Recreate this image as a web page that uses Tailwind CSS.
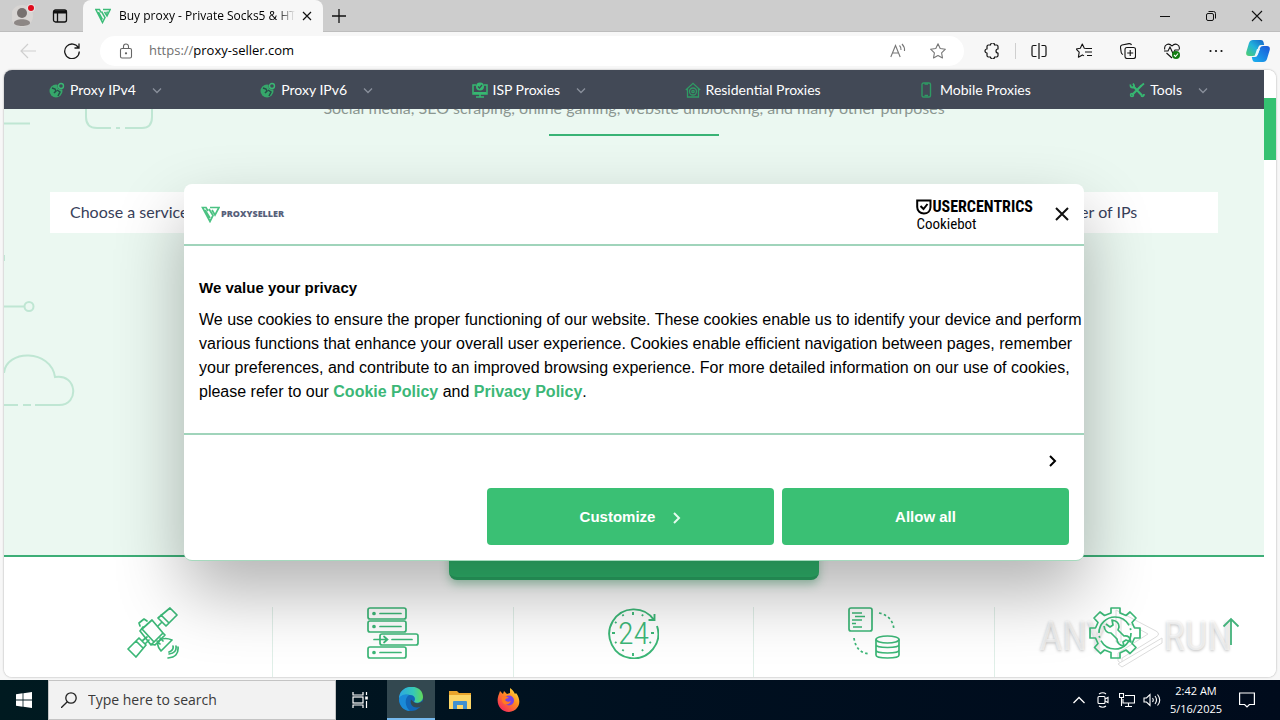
<!DOCTYPE html>
<html lang="en">
<head>
  <meta charset="UTF-8" />
  <meta name="viewport" content="width=device-width, initial-scale=1.0" />
  <title>Buy proxy - Private Socks5 &amp; HTTPs</title>
  <script src="https://cdn.jsdelivr.net/npm/@tailwindcss/browser@4"></script>
</head>
<body class="h-screen flex flex-col overflow-hidden bg-[#f7f7f7] text-black font-['Open_Sans','Noto_Sans',sans-serif]">

  <!-- Tab strip -->
  <div class="h-8 shrink-0 flex items-stretch bg-[#cdcdcd] border-b border-[#bdbdbd]">
    <div class="w-[83px] flex items-center pl-3 gap-4">
      <button aria-label="Profile">
        <svg class="w-6 h-6" viewBox="0 0 24 24"><circle cx="10" cy="12" r="11" fill="#d8d5d3"/><circle cx="10" cy="9" r="5" fill="#77716f"/><path d="M2 19c0-5 16-5 16 0 0 4-16 4-16 0z" fill="#8d8785"/><circle cx="19" cy="4" r="4" fill="#e8e0e0"/><circle cx="19" cy="4" r="3" fill="#e00b1c"/></svg>
      </button>
      <button aria-label="Tab actions">
        <svg class="w-4 h-4" viewBox="0 0 16 16" fill="none" stroke="#111" stroke-width="1.3"><rect x="1.5" y="2" width="13" height="12" rx="2"/><path d="M1.5 4h13" stroke-width="3"/><path d="M5.5 4v10"/></svg>
      </button>
    </div>
    <div class="w-60 flex items-center -mb-px pl-3 pr-2 bg-[#f7f7f7] rounded-t-lg">
      <svg class="w-4 h-4 mr-2 shrink-0" viewBox="0 0 16 16" fill="none" stroke="#3cbc78" stroke-width="1.5"><path d="M6 4.500L4.500 1.500H.8L7.500 14.500 10 9.500 6.500 3.500M8 1.500h7.200L12 8 9.500 3.800M3.500 4l4 7.500M12.500 3.500L11.500 5.500"/></svg>
      <span class="flex-1 text-xs whitespace-nowrap overflow-hidden mask-r-from-90%">Buy proxy - Private Socks5 &amp; HTTPs</span>
      <button aria-label="Close tab" class="ml-1">
        <svg class="w-4 h-4" viewBox="0 0 16 16" fill="none" stroke="#111" stroke-width="1.2"><path d="M4 4l8 8M12 4l-8 8"/></svg>
      </button>
    </div>
    <button aria-label="New tab" class="px-2">
      <svg class="w-4 h-4" viewBox="0 0 16 16" stroke="#111" stroke-width="1.3"><path d="M1 8h14M8 1v14"/></svg>
    </button>
    <div class="ml-auto flex">
      <button aria-label="Minimize" class="w-[46px] grid place-items-center"><svg class="w-3 h-3" viewBox="0 0 12 12" stroke="#111"><path d="M1 6.500h10"/></svg></button>
      <button aria-label="Restore" class="w-[46px] grid place-items-center"><svg class="w-3 h-3" viewBox="0 0 12 12" fill="none" stroke="#111"><rect x="1.500" y="3.500" width="7" height="7" rx="1.500"/><path d="M3.500 1.500h5a2 2 0 0 1 2 2v5"/></svg></button>
      <button aria-label="Close" class="w-[46px] grid place-items-center"><svg class="w-3 h-3" viewBox="0 0 12 12" stroke="#111" stroke-width="1.100"><path d="M1 1l10 10M11 1L1 11"/></svg></button>
    </div>
  </div>

  <!-- Toolbar -->
  <div class="h-[38px] shrink-0 flex items-center pl-5 pr-0.5">
    <button aria-label="Back" class="mr-7"><svg class="w-4 h-4" viewBox="0 0 16 16" fill="none" stroke="#cfcfcf" stroke-width="1.200"><path d="M16 8H1M8 1L1 8l7 7"/></svg></button>
    <button aria-label="Refresh" class="mr-5"><svg class="w-4 h-4" viewBox="0 0 16 16" fill="none" stroke="#1a1a1a" stroke-width="1.300"><path d="M14.500 5A7.300 7.300 0 1 0 15.300 8.500M15 .5V5h-4.500"/></svg></button>
    <div class="flex-1 h-[30px] flex items-center bg-white rounded-full pl-[18px] pr-[18px]">
      <svg class="w-4 h-4" viewBox="0 0 16 16" fill="none" stroke="#666" stroke-width="1.100"><rect x="2.500" y="5.500" width="11" height="9.500" rx="1.500"/><path d="M5.500 5.500V3.500a2.500 2.500 0 0 1 5 0v2"/><circle cx="8" cy="10.300" r=".6" fill="#666"/></svg>
      <a href="https://proxy-seller.com" class="ml-[15px] text-[13px]"><span class="text-[#707070]">https://</span>proxy-seller.com</a>
      <button aria-label="Read aloud" class="ml-auto"><svg class="w-4 h-4" viewBox="0 0 16 16" fill="none" stroke="#777" stroke-width="1.100"><path d="M.8 14L5.500 2.500 10.200 14M2.500 10h6M9.500 2.500q1.800 1.800 1.500 4.500M12 1q3 3 2.500 7"/></svg></button>
      <button aria-label="Add to favorites" class="ml-6"><svg class="w-4 h-4" viewBox="0 0 16 16" fill="none" stroke="#777" stroke-width="1.100" stroke-linejoin="round"><path d="M8 .8l2.200 4.700 5.200.7-3.800 3.600.9 5.200L8 12.500 3.500 15l.9-5.200L.6 6.200l5.200-.7z"/></svg></button>
    </div>
    <button aria-label="Extensions" class="w-[51px] pl-1 grid place-items-center"><svg class="w-4 h-4" viewBox="0 0 16 16" fill="none" stroke="#111" stroke-width="1.200" stroke-linejoin="round"><path d="M4.500 2h2a2 2 0 0 1 4 0h2q1.500 0 1.500 1.500V6a2 2 0 1 0 0 4v2.500q0 1.500-1.500 1.500h-2a2 2 0 0 1-4 0h-2Q3 14 3 12.500V10a2 2 0 1 1 0-4V3.500Q3 2 4.500 2z"/></svg></button>
    <span class="w-px h-4 bg-[#cfcfcf]"></span>
    <button aria-label="Split screen" class="w-[46px] grid place-items-center"><svg class="w-4 h-4" viewBox="0 0 16 16" fill="none" stroke="#111" stroke-width="1.200"><path d="M8 0v16M5.500 2.500h-3Q1 2.500 1 4v8q0 1.500 1.500 1.500h3M10.500 2.500h3q1.500 0 1.500 1.500v8q0 1.500-1.500 1.500h-3"/></svg></button>
    <button aria-label="Favorites" class="w-11 grid place-items-center"><svg class="w-4 h-4" viewBox="0 0 16 16" fill="none" stroke="#111" stroke-width="1.100" stroke-linejoin="round"><path d="M10.500 5.500L8.300 5.200 6.300 1 4.300 5.200 0 6l3.200 3.200-.8 5 4-2.300 1.600 1M10 5.500h6M9 9h7M11 12.500h5"/></svg></button>
    <button aria-label="Collections" class="w-11 grid place-items-center"><svg class="w-4 h-4" viewBox="0 0 16 16" fill="none" stroke="#111" stroke-width="1.100"><rect x="5" y="4.500" width="10.500" height="11" rx="2"/><path d="M10.200 7v6M7.200 10h6M3 11.500Q1.500 11 1.200 9.500L.5 4.500Q.4 2.500 2 2L9 .6q2-.2 2.500 1.400"/></svg></button>
    <button aria-label="Browser essentials" class="w-11 grid place-items-center"><svg class="w-4 h-4" viewBox="0 0 16 16" fill="none" stroke="#111" stroke-width="1.100"><path d="M.8 6.500C-.3 2 4.500-.8 8 3c3.500-3.800 8.300-1 7.200 3.500M0 8h4l2-4 3 6.500L11 7h4M2.500 10L8 15"/><circle cx="12" cy="12" r="4" fill="#137d13" stroke="none"/><path d="M10 12l1.500 1.500 2.500-3" stroke="#fff"/></svg></button>
    <button aria-label="Settings and more" class="w-11 grid place-items-center"><svg class="w-4 h-4" viewBox="0 0 16 16" fill="#111"><circle cx="2.500" cy="8" r="1.100"/><circle cx="8" cy="8" r="1.100"/><circle cx="13.500" cy="8" r="1.100"/></svg></button>
    <button aria-label="Copilot" class="w-10 grid place-items-center">
      <svg class="w-6 h-6" viewBox="0 0 24 24">
        <defs>
          <linearGradient id="cp1" x1="0" y1="1" x2="1" y2="0"><stop offset="0" stop-color="#4fd06a"/><stop offset=".5" stop-color="#22b2dc"/><stop offset="1" stop-color="#1560c8"/></linearGradient>
          <linearGradient id="cp2" x1="0" y1="1" x2="1" y2="0"><stop offset="0" stop-color="#1bb5ef"/><stop offset="1" stop-color="#1b55d8"/></linearGradient>
        </defs>
        <path d="M7 1h8q2 0 2.500 2l.7 3H15q-2 0-2.600 2L10 15q-.7 2-3 2H3Q-.5 17 .3 13L3 4Q4 1 7 1z" fill="url(#cp1)"/>
        <path d="M17 23H9q-2 0-2.500-2l-.7-3H9q2 0 2.600-2L14 9q.7-2 3-2h4q3.500 0 2.700 4L21 20q-1 3-4 3z" fill="url(#cp2)"/>
        <path d="M11 10h3l-2 5q-.4 1-1.500 1H9z" fill="#e8f8ff"/>
      </svg>
    </button>
  </div>

  <!-- Web page -->
  <div class="relative flex-1 flex mx-1 mb-[3px] bg-white rounded-lg overflow-hidden shadow-[0_0_2px_#999]">
    <div class="relative flex-1 flex flex-col min-w-0 font-[Lato,sans-serif]">

      <header class="relative z-10 h-[39px] shrink-0 bg-[#424956] text-white text-sm">
        <nav class="h-full flex items-center justify-between pl-[45px] pr-14">
          <a href="#ipv4" class="flex items-center gap-[5px]">
            <svg class="w-4 h-4" viewBox="0 0 16 16" fill="none"><circle cx="7" cy="9" r="6.500" fill="#36a76a"/><path d="M3 6l3 1 1 2-2 2M9 14l2-4-3-2" stroke="#274d48" stroke-width="1.500"/><circle cx="12" cy="4" r="3.500" fill="#424956"/><circle cx="12" cy="4" r="2.500" stroke="#39b873" stroke-width="1.400"/></svg>
            Proxy IPv4
            <svg class="w-[10px] h-[10px] ml-[11px]" viewBox="0 0 10 10" fill="none" stroke="#8a909c" stroke-width="1.300"><path d="M1 3.500l4 4 4-4"/></svg>
          </a>
          <a href="#ipv6" class="flex items-center gap-[5px]">
            <svg class="w-4 h-4" viewBox="0 0 16 16" fill="none"><circle cx="7" cy="9" r="6.500" fill="#36a76a"/><path d="M3 6l3 1 1 2-2 2M9 14l2-4-3-2" stroke="#274d48" stroke-width="1.500"/><circle cx="12" cy="4" r="3.500" fill="#424956"/><circle cx="12" cy="4" r="2.500" stroke="#39b873" stroke-width="1.400"/></svg>
            Proxy IPv6
            <svg class="w-[10px] h-[10px] ml-[11px]" viewBox="0 0 10 10" fill="none" stroke="#8a909c" stroke-width="1.300"><path d="M1 3.500l4 4 4-4"/></svg>
          </a>
          <a href="#isp" class="flex items-center gap-[5px]">
            <svg class="w-4 h-4" viewBox="0 0 16 16" fill="none" stroke="#36b771" stroke-width="1.500"><path d="M4 3H1v9h14V3h-3M4 15h8M8 12v3"/><path d="M1.500 11h13" stroke-width="2"/><circle cx="8" cy="4.500" r="4" fill="#36b771" stroke="none"/><path d="M6 4.500L7.500 6 10 3" stroke="#424956" stroke-width="1.200"/></svg>
            ISP Proxies
            <svg class="w-[10px] h-[10px] ml-[11px]" viewBox="0 0 10 10" fill="none" stroke="#8a909c" stroke-width="1.300"><path d="M1 3.500l4 4 4-4"/></svg>
          </a>
          <a href="#residential" class="flex items-center gap-[5px]">
            <svg class="w-4 h-4" viewBox="0 0 16 16" fill="none" stroke="#2f9a64" stroke-width="1.300"><path d="M.8 8L8 1.300 15.200 8M2.500 6.500V15h11V6.500"/><circle cx="8" cy="9.500" r="3.500"/><circle cx="8" cy="9.500" r="1.200"/></svg>
            Residential Proxies
          </a>
          <a href="#mobile" class="flex items-center gap-[5px]">
            <svg class="w-4 h-4" viewBox="0 0 16 16" fill="none" stroke="#2f9a64" stroke-width="1.400"><rect x="3" y="1" width="8.500" height="14" rx="1.500"/><path d="M5.500 2h3.500M5.500 13.500h3.500"/></svg>
            Mobile Proxies
          </a>
          <a href="#tools" class="flex items-center gap-[5px]">
            <svg class="w-4 h-4" viewBox="0 0 16 16" fill="none" stroke="#36b771" stroke-width="2.200"><path d="M4 4l9 9.500M12.500 3.500L3 13"/><path d="M1.500 2.500Q1 6 4.500 5.500 6 4 4 1.500M12 14q3 1 3-2M15 1.500L12 4" stroke-width="1.800"/><circle cx="3" cy="13" r="1.500" stroke-width="1.500"/></svg>
            Tools
            <svg class="w-[10px] h-[10px] ml-[11px]" viewBox="0 0 10 10" fill="none" stroke="#8a909c" stroke-width="1.300"><path d="M1 3.500l4 4 4-4"/></svg>
          </a>
        </nav>
      </header>

      <!-- Hero, scrolled partly under the header -->
      <section class="relative h-[448px] shrink-0 bg-[#ebf8f1] border-b-2 border-[#3dae77]">
        <svg class="absolute left-0 top-0 w-[160px] h-[300px]" viewBox="0 0 160 300" fill="none" stroke="#bfe6d3" stroke-width="2">
          <path d="M0 14.500h26M82 0v8q0 11 11 11h14M112 19h4M121 19h17q10 0 10-11V0M0 197.500h20"/>
          <circle cx="25" cy="197.500" r="4.500"/>
          <path d="M0 264c2-24 47-24 51 4 22-4 25 28 4 28H31M27 296h-8M14 296H0M0 146v6"/>
        </svg>
        <div class="relative -mt-[13px] flex flex-col items-center">
          <p class="text-base leading-6 text-[#8b9791]">Social media, SEO scraping, online gaming, website unblocking, and many other purposes</p>
          <div class="w-[170px] h-0.5 mt-[14px] bg-[#39b375]"></div>
        </div>
        <form class="relative mt-14 mx-[46px] h-[41px] flex items-center justify-between bg-white text-base text-[#38405a]">
          <select aria-label="Service" class="appearance-none w-60 h-full pl-5 pb-0.5"><option>Choose a service</option></select>
          <select aria-label="Number of IPs" class="appearance-none w-[201px] h-full pl-5 pb-0.5"><option>Number of IPs</option></select>
        </form>
      </section>

      <!-- Feature icons -->
      <section class="relative flex-1 bg-white">
        <div class="absolute inset-x-0 -top-10 flex justify-center">
          <button class="w-[370px] h-[63px] pt-1.5 bg-[#31bb70] border-b-3 border-[#2ba865] rounded-lg text-lg text-white shadow-[0_4px_10px_#27965a66]">Check proxy features &amp; pricing</button>
        </div>
        <!-- Watermark -->
        <div class="absolute right-8 top-[49px] flex items-center text-[40px] leading-[62px] font-['Roboto_Condensed',Roboto,sans-serif] text-white/60 [text-shadow:0_1px_3px_#00000040]">
          <span>ANY</span>
          <svg class="w-14 h-[62px]" viewBox="0 0 56 62" fill="#fff" stroke="#dcdcdc"><path d="M8 4L48 25q5 3 0 6L14 52v6l-4-3v-8l30-19L13 13v23H8z"/><path d="M10 58L54 32v5L14 61z"/></svg>
          <span>RUN</span>
        </div>
        <div class="relative mt-[50px] mx-[29px] h-[70px] grid grid-cols-5 divide-x divide-[#e0efe8] text-[#3cb777]">
          <div class="flex justify-center">
            <svg class="w-[52px] h-[52px]" viewBox="0 0 52 52" fill="none" stroke="currentColor" stroke-width="1.700" stroke-linejoin="round" stroke-linecap="round">
              <path d="M43 1l7 7-11 11-8-8zM34 8l8 8M35 15l-4 4M12 31l7 7L9 50l-8-8zM9 34l7 7M15 34l5-4M18 37l4-4"/>
              <path d="M15 22l10-9 11 13-9 9zM13 24l3-4M27 35l-3 3L13 24M36 26l2 2-10 10-4-1M13 19l-1-3 5-4 3 2"/>
              <path d="M33 31l3 3M30 34l3 3M45 33l-11 11q-6-7-1-11 5-3 12 0zM46 39q1 4-4 6M49 39q1 7-7 8M51 40q1 10-10 11"/>
            </svg>
          </div>
          <div class="flex justify-center">
            <svg class="w-[52px] h-[52px]" viewBox="0 0 52 52" fill="none" stroke="currentColor" stroke-width="1.700" stroke-linecap="round">
              <rect x="1" y="1" width="38" height="11" rx="2"/><rect x="1" y="14" width="38" height="11" rx="2"/><rect x="13" y="27" width="38" height="11" rx="2"/><rect x="1" y="40" width="38" height="11" rx="2"/>
              <path d="M13 6.500h21M13 19.500h21M25 32.500h20M13 45.500h21M7 32.500h13M17 29.500l3.500 3-3.500 3"/>
              <g fill="currentColor"><circle cx="7" cy="6.500" r="1"/><circle cx="7" cy="19.500" r="1"/><circle cx="7" cy="45.500" r="1"/></g>
            </svg>
          </div>
          <div class="relative flex justify-center">
            <svg class="w-[52px] h-[52px]" viewBox="0 0 52 52" fill="none" stroke="currentColor" stroke-width="1.900">
              <path d="M47 13A24.500 24.500 0 1 0 50 19M47.500 7v6h-6"/>
              <path d="M26 5v3M26 46v3M5 26h3M44 26h3M15.500 7.500l1 1.500M36 7.500L35 9M8 15l1.500 1M8 36l1.500-1M15.500 44l1-1.500M36 44l-1-1.500M44 36l-1.500-1"/>
            </svg>
            <span class="absolute top-1.5 text-[32px] leading-10 font-light font-['Roboto_Condensed',Roboto,sans-serif]">24</span>
          </div>
          <div class="flex justify-center">
            <svg class="w-[52px] h-[52px]" viewBox="0 0 52 52" fill="none" stroke="currentColor" stroke-width="1.700">
              <rect x="1" y="1" width="23" height="23" rx="2"/>
              <path d="M4 6h10M7 9.500h10M4 13h10M4 16.500h4M5 20h9"/>
              <path d="M31 6q14 3 15 17M6 31q2 15 16 16" stroke-dasharray="2.500 2.500"/>
              <ellipse cx="39.500" cy="32.500" rx="11.500" ry="3.500"/><path d="M28 32.500V48c0 4 23 4 23 0V32.500M28 37.500c0 4 23 4 23 0M28 43c0 4 23 4 23 0"/>
            </svg>
          </div>
          <div class="flex justify-center">
            <svg class="w-[52px] h-[52px]" viewBox="0 0 52 52" fill="none" stroke="currentColor" stroke-width="1.700" stroke-linejoin="round">
              <path d="M22 1h9v5l6 2.500 4-3.500 6 6-4 4.500 2.500 5.500H51v10h-5.500L43 36.500l4 4-6 6-4-3.500-6 3V51h-9v-5.500L15.500 43l-4 3.500-6-6 3.500-4L6.500 31H1V21h5.500L9 15.500 5 11l6-6 4.500 3.500L22 6z"/>
              <circle cx="26" cy="26" r="16" stroke-dasharray="42 3 2 3"/>
              <path d="M17 17l4 3 3-2-1-5q7 1 7 7l-1 3 6 6q6-1 7 6l-5-2-3 2 1 4q-7-1-7-7l-6-6q-6 0-7-7"/>
            </svg>
          </div>
        </div>
        <a href="#top" aria-label="Back to top" class="absolute right-6 top-[60px]">
          <svg class="w-[18px] h-7" viewBox="0 0 18 28" fill="none" stroke="#43b27b" stroke-width="1.800"><path d="M9 28V2M1.500 9.500L9 2l7.500 7.500"/></svg>
        </a>
      </section>

      <!-- Cookie dialog -->
      <div class="absolute inset-x-0 top-[114px] z-20 flex justify-center font-['Liberation_Sans',Arial,sans-serif]">
        <div role="dialog" aria-labelledby="cookie-title" class="w-[900px] bg-white rounded-lg border-b border-[#a5d9bd] shadow-[0_32px_68px_#0000004d]">
          <div class="h-[62px] flex items-center pl-[17px] pr-[15px] border-b-2 border-[#a0d4bb]">
            <svg class="w-[19px] h-[17px]" viewBox="0 0 19 17" fill="none" stroke="#4cc283" stroke-width="1.700"><path d="M7 5L5 1.500H1.500L9 15.500 12 9.500 8 3M9 1.500h9L14 9 11 4M4 4l5 8"/></svg>
            <span class="font-['Open_Sans',sans-serif] font-extrabold text-[9px] text-[#56607a] ml-px">PROXYSELLER</span>
            <div class="ml-auto mr-[22px] font-['Roboto_Condensed',sans-serif]">
              <div class="flex items-center mt-1">
                <svg class="w-4 h-4" viewBox="0 0 16 16" fill="none" stroke="#000" stroke-width="2"><path d="M1.200 1.500h13.300V8c0 4-3 6.500-6.600 6.500S1.200 12 1.200 8z"/><path d="M4.500 7l3 3 4-5"/></svg>
                <span class="font-bold text-base leading-4">USERCENTRICS</span>
              </div>
              <p class="text-[15px] leading-[18px]">Cookiebot</p>
            </div>
            <button aria-label="Close banner"><svg class="w-[14px] h-[14px]" viewBox="0 0 14 14" stroke="#111" stroke-width="2"><path d="M1 1l12 12M13 1L1 13"/></svg></button>
          </div>
          <div class="pt-[30px] px-[15px] pb-[29px] border-b-2 border-[#a0d4bb]">
            <h2 id="cookie-title" class="text-[15px] leading-6 font-bold">We value your privacy</h2>
            <p class="mt-2 text-base leading-6 whitespace-nowrap">We use cookies to ensure the proper functioning of our website. These cookies enable us to identify your device and perform<br />
              various functions that enhance your overall user experience. Cookies enable efficient navigation between pages, remember<br />
              your preferences, and contribute to an improved browsing experience. For more detailed information on our use of cookies,<br />
              please refer to our <a href="#cookie-policy" class="font-bold text-[#3cb777]">Cookie Policy</a> and <a href="#privacy-policy" class="font-bold text-[#3cb777]">Privacy Policy</a>.</p>
          </div>
          <div class="px-[15px] pb-[15px]">
            <div class="h-[53px] flex items-center justify-end pr-3 pb-0.5">
              <button aria-label="Show details"><svg class="w-2 h-3" viewBox="0 0 8 12" fill="none" stroke="#000" stroke-width="2"><path d="M1 1l5 5-5 5"/></svg></button>
            </div>
            <div class="flex justify-end gap-2 text-[15px] font-bold text-white">
              <button class="w-[287px] h-[57px] pt-0.5 flex items-center justify-center gap-[18px] bg-[#3ac074] rounded-sm">Customize
                <svg class="w-2 h-3" viewBox="0 0 8 12" fill="none" stroke="#e4fbee" stroke-width="2"><path d="M1 1l5 5-5 5"/></svg>
              </button>
              <button class="w-[287px] h-[57px] pt-0.5 bg-[#3ac074] rounded-sm">Allow all</button>
            </div>
          </div>
        </div>
      </div>
    </div>

    <!-- Scrollbar -->
    <div class="w-3 pt-7 bg-white"><div class="h-[62px] bg-[#35c171]"></div></div>
  </div>

  <!-- Taskbar -->
  <footer class="h-10 shrink-0 flex items-stretch bg-linear-to-r from-[#001a20] via-[#001020] to-[#000b1c] text-white">
    <button aria-label="Start" class="w-12 grid place-items-center"><svg class="w-4 h-4" viewBox="0 0 16 16" fill="#fff"><path d="M0 2.200l6.600-.9v6.300H0zM7.400 1.200L16 0v7.600H7.400zM0 8.400h6.600v6.300L0 13.800zM7.400 8.400H16V16l-8.600-1.200z"/></svg></button>
    <div class="w-72 flex items-center pl-3 gap-[11px] bg-[#f2f2f2] border border-[#c4c4c4]">
      <svg class="w-4 h-4 shrink-0" viewBox="0 0 16 16" fill="none" stroke="#222" stroke-width="1.300"><circle cx="10" cy="6" r="5.200"/><path d="M6.300 9.700L0 16"/></svg>
      <input type="text" aria-label="Search" placeholder="Type here to search" class="w-full text-sm outline-none placeholder:text-[#3a3a3a]" />
    </div>
    <button aria-label="Task view" class="w-[51px] pr-1 grid place-items-center"><svg class="w-4 h-4" viewBox="0 0 16 16" fill="none" stroke="#fff" stroke-width="1.200"><path d="M1 0v3h10V0M1 16v-3h10v3M14.500 0v3M14.500 9v7"/><rect x="1" y="5" width="10" height="6"/><path d="M14.500 4.500v3" stroke-width="2.600"/></svg></button>
    <button aria-label="Microsoft Edge" class="w-12 grid place-items-center bg-[#334850] border-b-2 border-[#76b9ed]">
      <svg class="w-6 h-6" viewBox="0 0 24 24">
        <defs><linearGradient id="ed" x1="0" y1="0" x2="1" y2="0"><stop offset="0" stop-color="#2ba7e4"/><stop offset=".6" stop-color="#36c8b7"/><stop offset="1" stop-color="#62d957"/></linearGradient></defs>
        <circle cx="12" cy="12" r="12" fill="#1266b8"/>
        <path d="M0 12C0-4 24-4 24 10c0 5-6 7-9 5 2-3 1-7-4-7C6 7 1 9 0 12z" fill="url(#ed)"/>
        <path d="M0 12c1-4 6-5.500 10-4-5 3-4 12 1 16C5 24 0 19 0 12z" fill="#1a8ad8"/>
        <path d="M14.500 15c3 2 7 1.500 9-1.500l.5 4-2 2c-6 3-12-1-10-7 1 1 2 1.500 2.500 2.500z" fill="#334850"/>
      </svg>
    </button>
    <button aria-label="File Explorer" class="w-[50px] grid place-items-center"><svg class="w-[22px] h-5" viewBox="0 0 22 20"><path d="M0 1h8l2 2h12v16H0z" fill="#e9a52c"/><path d="M0 5h22v14H0z" fill="#fcd667"/><path d="M4 19v-7q0-1 1-1h12q1 0 1 1v7h-4v-4H8v4z" fill="#3f90cf"/></svg></button>
    <button aria-label="Firefox" class="w-12 grid place-items-center">
      <svg class="w-6 h-6" viewBox="0 0 24 24">
        <defs><linearGradient id="fx" x1="1" y1="0" x2=".2" y2="1"><stop offset="0" stop-color="#fff14a"/><stop offset=".45" stop-color="#ff8f1f"/><stop offset="1" stop-color="#f5245f"/></linearGradient></defs>
        <path d="M2 6l1-3 3 3 1-3 3 3 3-1V0c3 2 4 4 5 6l1-1c6 7 4 18-7 19C3 24-2 15 2 6z" fill="url(#fx)"/>
        <circle cx="12" cy="12.500" r="5" fill="#7542e5"/><path d="M5 9q4-2 7 1-3 0-4 2 2 3 6 1-2 5-7 3-3-3-2-7z" fill="#ff7a22"/>
      </svg>
    </button>
    <div class="ml-auto flex items-center gap-2">
      <svg class="w-4 h-4" viewBox="0 0 16 16" fill="none" stroke="#fff" stroke-width="1.300"><path d="M2.500 11L8 5.500l5.500 5.500"/></svg>
      <svg class="w-4 h-4" viewBox="0 0 16 16" fill="none" stroke="#fff" stroke-width="1.100"><rect x="3" y="4.500" width="7" height="7" rx="1"/><path d="M10 7l3-1.500v5L10 9M4 2q4-2.500 7 0M4 14q4 2.500 7 0"/></svg>
      <svg class="w-4 h-4" viewBox="0 0 16 16" fill="none" stroke="#fff" stroke-width="1.100"><path d="M6 3.500h9.500v7.500H4V7M9.500 11v3M6 14.500h7M.5 1.500h4v4h-4zM2.500 5.500V14"/></svg>
      <svg class="w-[18px] h-4" viewBox="0 0 18 16" fill="none" stroke="#fff" stroke-width="1.100"><path d="M1 6h2.500L7 2.500v11L3.500 10H1zM9.500 6q1.500 2 0 4M12 4q3 4 0 8M14.500 2.500q4.500 5.500 0 11"/></svg>
      <div class="w-[54px] text-center text-[11px] leading-[18px]"><p>2:42 AM</p><p>5/16/2025</p></div>
      <button aria-label="Notifications" class="ml-2 mr-[25px]"><svg class="w-4 h-4" viewBox="0 0 16 16" fill="none" stroke="#fff" stroke-width="1.200"><path d="M.6 1h14.800v11.500h-5L8 15l-2.400-2.500h-5z"/></svg></button>
    </div>
  </footer>
</body>
</html>
